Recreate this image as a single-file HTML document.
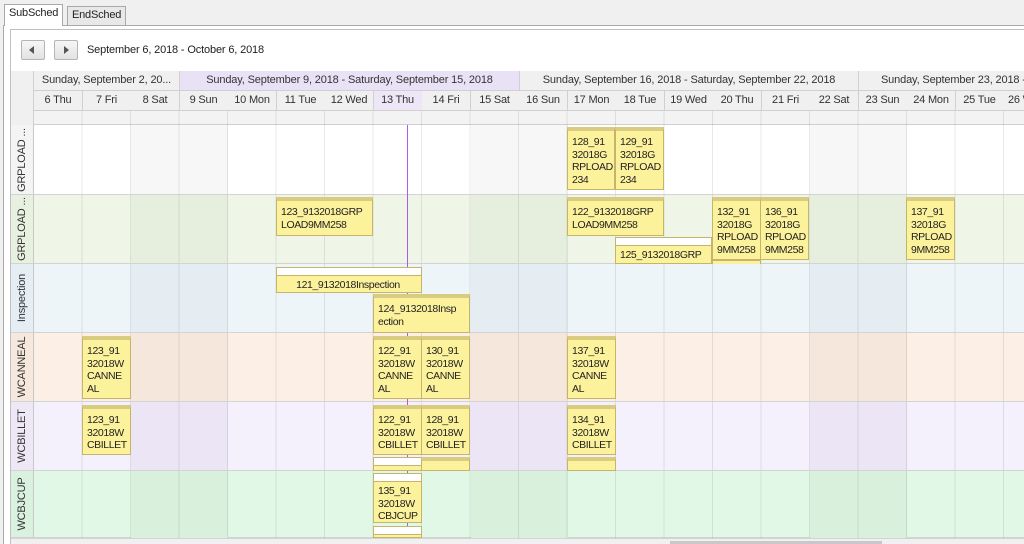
<!DOCTYPE html>
<html><head><meta charset="utf-8"><style>
*{box-sizing:border-box;margin:0;padding:0}
body{width:1024px;height:544px;overflow:hidden;background:#f0f0f0;font-family:"Liberation Sans",Tahoma,sans-serif;font-size:11px;color:#222;position:relative}
.a{position:absolute}
.tab{position:absolute;top:6px;height:19px;border:1px solid #a9a9a9;border-bottom:none;padding:2px 4px;font-size:11px;letter-spacing:-0.2px}
.wk{position:absolute;top:71px;height:20px;border-right:1px solid #d0d0d0;border-bottom:1px solid #d0d0d0;text-align:center;line-height:19px;color:#333;white-space:nowrap;overflow:hidden;letter-spacing:-0.15px}
.dy{position:absolute;top:91px;height:20px;width:49px;border-right:1px solid #d0d0d0;border-bottom:1px solid #d0d0d0;text-align:center;line-height:19px;background:#f0f0f1;color:#333;letter-spacing:-0.2px}
.row{position:absolute;left:34px;width:990px;height:69px;border-bottom:1px solid #d3d3d3}
.rh{position:absolute;left:11px;width:23px;height:69px;border-right:1px solid #c8c8c8;border-bottom:1px solid #d3d3d3}
.rh span{position:absolute;left:50%;top:50%;transform:translate(-50%,-50%) rotate(-90deg);white-space:nowrap;color:#333;letter-spacing:-0.2px}
.we{position:absolute;width:97px;height:69px}
.ap{position:absolute;background:#fdf29c;border:1px solid #c4b46c;border-top:4px solid #d9cb7f;padding:5px 2px 0 4px;line-height:12.5px;overflow:hidden;white-space:nowrap;color:#222;font-size:10.5px;letter-spacing:-0.4px}
.ap.w{border-top:1px solid #c4b46c}
.ap.w:before{content:"";display:block;height:7px;margin:-5px -2px 3px -4px;background:#fff;border-bottom:1px solid #c4b46c}
</style></head><body>
<div class="a" style="left:0;top:0;width:1024px;height:25px;background:#f0f0f0"></div>
<div class="tab" style="left:4px;top:4px;height:22px;background:#fff;z-index:2">SubSched</div>
<div class="tab" style="left:67px;background:#e8e8e8">EndSched</div>
<div class="a" style="left:3px;top:25px;width:1021px;height:519px;border-left:1px solid #a9a9a9;border-top:1px solid #a9a9a9;background:#fff"></div>
<div class="a" style="left:10px;top:29px;width:1014px;height:515px;border-left:1px solid #c0c0c0;border-top:1px solid #c0c0c0;background:#fff"></div>
<div class="a" style="left:21px;top:40px;width:24px;height:20px;border:1px solid #b5b5b5;border-radius:2px;background:linear-gradient(#f6f6f6,#e2e2e2)"><div class="a" style="left:7px;top:5px;border:4px solid transparent;border-right:5px solid #555;border-left:none;width:0;height:0"></div></div>
<div class="a" style="left:54px;top:40px;width:24px;height:20px;border:1px solid #b5b5b5;border-radius:2px;background:linear-gradient(#f6f6f6,#e2e2e2)"><div class="a" style="left:9px;top:5px;border:4px solid transparent;border-left:5px solid #555;border-right:none;width:0;height:0"></div></div>
<div class="a" style="left:87px;top:44px;color:#222;letter-spacing:-0.15px">September 6, 2018 - October 6, 2018</div>
<div class="a" style="left:11px;top:71px;width:23px;height:54px;background:#f0f0f0;border-right:1px solid #d0d0d0"></div>
<div class="wk" style="left:34px;width:146px;background:#f0f0f1">Sunday, September 2, 20...</div>
<div class="wk" style="left:180px;width:340px;background:#e9e2f7">Sunday, September 9, 2018 - Saturday, September 15, 2018</div>
<div class="wk" style="left:520px;width:339px;background:#f0f0f1">Sunday, September 16, 2018 - Saturday, September 22, 2018</div>
<div class="wk" style="left:859px;width:180px;background:#f0f0f1;text-align:left;padding-left:22px">Sunday, September 23, 2018 - Saturday</div>
<div class="dy" style="left:34px">6 Thu</div><div class="dy" style="left:82.5px">7 Fri</div><div class="dy" style="left:131px">8 Sat</div><div class="dy" style="left:179.5px">9 Sun</div><div class="dy" style="left:228px">10 Mon</div><div class="dy" style="left:276.5px">11 Tue</div><div class="dy" style="left:325px">12 Wed</div><div class="dy" style="left:373.5px;background:#ece6f7">13 Thu</div><div class="dy" style="left:422px">14 Fri</div><div class="dy" style="left:470.5px">15 Sat</div><div class="dy" style="left:519px">16 Sun</div><div class="dy" style="left:567.5px">17 Mon</div><div class="dy" style="left:616px">18 Tue</div><div class="dy" style="left:664.5px">19 Wed</div><div class="dy" style="left:713px">20 Thu</div><div class="dy" style="left:761.5px">21 Fri</div><div class="dy" style="left:810px">22 Sat</div><div class="dy" style="left:858.5px">23 Sun</div><div class="dy" style="left:907px">24 Mon</div><div class="dy" style="left:955.5px">25 Tue</div><div class="dy" style="left:1004px;text-align:left;padding-left:4px">26 Wed</div>
<div class="a" style="left:34px;top:111px;width:990px;height:14px;background:#f3f3f3;border-bottom:1px solid #cfcfcf"></div>

<div class="row" style="top:125px;height:70px;background:#fff"></div>
<div class="row" style="top:195px;background:#eff6e7"></div>
<div class="row" style="top:264px;background:#edf5f9"></div>
<div class="row" style="top:333px;background:#fcefe5"></div>
<div class="row" style="top:402px;background:#f4f0fc"></div>
<div class="row" style="top:471px;height:67px;background:#e2f8e6"></div>
<div class="we" style="left:131px;top:125px;height:70px;background:#f7f7f7"></div><div class="we" style="left:470.5px;top:125px;height:70px;background:#f7f7f7"></div><div class="we" style="left:810px;top:125px;height:70px;background:#f7f7f7"></div>
<div class="we" style="left:131px;top:195px;background:#e6efdd"></div><div class="we" style="left:470.5px;top:195px;background:#e6efdd"></div><div class="we" style="left:810px;top:195px;background:#e6efdd"></div>
<div class="we" style="left:131px;top:264px;background:#e5edf2"></div><div class="we" style="left:470.5px;top:264px;background:#e5edf2"></div><div class="we" style="left:810px;top:264px;background:#e5edf2"></div>
<div class="we" style="left:131px;top:333px;background:#f5e7dc"></div><div class="we" style="left:470.5px;top:333px;background:#f5e7dc"></div><div class="we" style="left:810px;top:333px;background:#f5e7dc"></div>
<div class="we" style="left:131px;top:402px;background:#ebe5f5"></div><div class="we" style="left:470.5px;top:402px;background:#ebe5f5"></div><div class="we" style="left:810px;top:402px;background:#ebe5f5"></div>
<div class="we" style="left:131px;top:471px;height:67px;background:#d9f0dd"></div><div class="we" style="left:470.5px;top:471px;height:67px;background:#d9f0dd"></div><div class="we" style="left:810px;top:471px;height:67px;background:#d9f0dd"></div>
<div class="a" style="left:34px;top:111px;width:990px;height:427px;background:repeating-linear-gradient(90deg,transparent 0,transparent 47.5px,rgba(0,0,0,0.09) 47.5px,rgba(0,0,0,0.09) 48.5px)"></div>
<div class="a" style="left:34px;top:194px;width:990px;height:1px;background:#d3d3d3"></div>
<div class="a" style="left:34px;top:263px;width:990px;height:1px;background:#d3d3d3"></div>
<div class="a" style="left:34px;top:332px;width:990px;height:1px;background:#d3d3d3"></div>
<div class="a" style="left:34px;top:401px;width:990px;height:1px;background:#d3d3d3"></div>
<div class="a" style="left:34px;top:470px;width:990px;height:1px;background:#d3d3d3"></div>
<div class="rh" style="top:125px;height:70px;background:#f4f4f4"><span>GRPLOAD ...</span></div>
<div class="rh" style="top:195px;background:#e8f0df"><span>GRPLOAD ...</span></div>
<div class="rh" style="top:264px;background:#e5eef3"><span>Inspection</span></div>
<div class="rh" style="top:333px;background:#f6e8dc"><span>WCANNEAL</span></div>
<div class="rh" style="top:402px;background:#ede7f6"><span>WCBILLET</span></div>
<div class="rh" style="top:471px;height:67px;background:#d9f1de"><span>WCBJCUP</span></div>
<div class="a" style="left:407px;top:125px;width:1px;height:413px;background:#a95de0"></div>
<div class="ap" style="left:567px;top:127px;width:48px;height:63px">128_91<br>32018G<br>RPLOAD<br>234</div>
<div class="ap" style="left:615px;top:127px;width:49px;height:63px">129_91<br>32018G<br>RPLOAD<br>234</div>
<div class="ap" style="left:276px;top:197px;width:97px;height:39px">123_9132018GRP<br>LOAD9MM258</div>
<div class="ap" style="left:567px;top:197px;width:97px;height:39px">122_9132018GRP<br>LOAD9MM258</div>
<div class="ap w" style="left:615px;top:237px;width:97px;height:27px">125_9132018GRP<br>LOAD9MM258</div>
<div class="ap" style="left:712px;top:197px;width:49px;height:63px">132_91<br>32018G<br>RPLOAD<br>9MM258</div>
<div class="ap" style="left:760px;top:197px;width:49px;height:63px">136_91<br>32018G<br>RPLOAD<br>9MM258</div>
<div class="ap" style="left:906px;top:197px;width:49px;height:63px">137_91<br>32018G<br>RPLOAD<br>9MM258</div>
<div class="a" style="left:712px;top:260px;width:49px;height:4px;background:#fdf29c;border:1px solid #c4b46c;border-bottom:none"></div>
<div class="ap w" style="left:276px;top:267px;width:146px;height:26px;text-align:center;padding-left:0">121_9132018Inspection</div>
<div class="ap" style="left:373px;top:294px;width:97px;height:39px">124_9132018Insp<br>ection</div>
<div class="ap" style="left:82px;top:336px;width:49px;height:63px">123_91<br>32018W<br>CANNE<br>AL</div>
<div class="ap" style="left:373px;top:336px;width:49px;height:63px">122_91<br>32018W<br>CANNE<br>AL</div>
<div class="ap" style="left:421px;top:336px;width:49px;height:63px">130_91<br>32018W<br>CANNE<br>AL</div>
<div class="ap" style="left:567px;top:336px;width:49px;height:63px">137_91<br>32018W<br>CANNE<br>AL</div>
<div class="ap" style="left:82px;top:405px;width:49px;height:50px">123_91<br>32018W<br>CBILLET</div>
<div class="ap" style="left:373px;top:405px;width:49px;height:50px">122_91<br>32018W<br>CBILLET</div>
<div class="ap" style="left:421px;top:405px;width:49px;height:50px">128_91<br>32018W<br>CBILLET</div>
<div class="ap" style="left:567px;top:405px;width:49px;height:50px">134_91<br>32018W<br>CBILLET</div>
<div class="ap w" style="left:373px;top:457px;width:49px;height:14px"></div>
<div class="ap" style="left:421px;top:457px;width:49px;height:14px"></div>
<div class="ap" style="left:567px;top:457px;width:49px;height:14px"></div>
<div class="ap w" style="left:373px;top:473px;width:49px;height:50px">135_91<br>32018W<br>CBJCUP</div>
<div class="ap w" style="left:373px;top:526px;width:49px;height:12px"></div>
<div class="a" style="left:11px;top:538px;width:1013px;height:6px;background:#f0f0f0;border-top:1px solid #d3d3d3"></div>
<div class="a" style="left:670px;top:541px;width:212px;height:3px;background:#c8c8c8"></div>
</body></html>
